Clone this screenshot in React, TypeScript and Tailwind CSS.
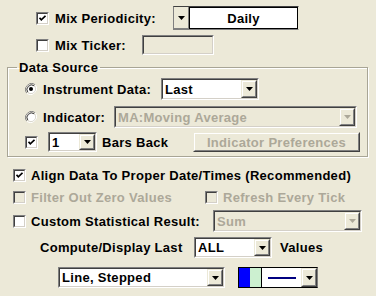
import React from 'react';

const outerSunken = "border border-t-[#808080] border-l-[#808080] border-b-white border-r-white";
const innerSunken = "border border-t-[#404040] border-l-[#404040] border-b-[#d4d0c8] border-r-[#d4d0c8]";
const outerRaised = "border border-t-[#ece9d8] border-l-[#ece9d8] border-b-[#404040] border-r-[#404040]";
const innerRaised = "border border-t-white border-l-white border-b-[#808080] border-r-[#808080]";

function Arrow({ disabled = false }: { disabled?: boolean }) {
    return (
        <svg width="7" height="4" viewBox="0 0 7 4">
            <path d="M0 0h7L3.5 4z" fill={disabled ? '#aca899' : '#000'} />
        </svg>
    );
}

function DropButton({ disabled = false }: { disabled?: boolean }) {
    return (
        <div className={`w-[16px] h-full shrink-0 bg-[#ece9d8] ${outerRaised}`}>
            <div className={`w-full h-full flex items-center justify-center ${innerRaised}`}>
                <Arrow disabled={disabled} />
            </div>
        </div>
    );
}

function Check({ checked = false, disabled = false }: { checked?: boolean; disabled?: boolean }) {
    return (
        <div className={`w-[13px] h-[13px] shrink-0 ${outerSunken}`}>
            <div className={`w-full h-full flex items-center justify-center ${innerSunken} ${disabled ? 'bg-[#ece9d8]' : 'bg-white'}`}>
                {checked && (
                    <svg width="7" height="7" viewBox="0 0 7 7">
                        <path d="M0.5 2.8 L2.3 4.8 L6.5 0.8" stroke="#000" strokeWidth="1.7" fill="none" />
                    </svg>
                )}
            </div>
        </div>
    );
}

function Radio({ checked = false }: { checked?: boolean }) {
    return (
        <svg width="12" height="12" viewBox="0 0 12 12" className="shrink-0">
            <path d="M10.2 1.8 A6 6 0 0 0 1.8 10.2" stroke="#808080" strokeWidth="1" fill="none" />
            <path d="M1.8 10.2 A6 6 0 0 0 10.2 1.8" stroke="#fff" strokeWidth="1" fill="none" />
            <circle cx="6" cy="6" r="4.6" fill="#fff" stroke="#d4d0c8" strokeWidth="0.8" />
            <path d="M9.2 2.8 A4.6 4.6 0 0 0 2.8 9.2" stroke="#404040" strokeWidth="1" fill="none" />
            {checked && <circle cx="6" cy="6" r="2" fill="#000" />}
        </svg>
    );
}

function Combo({ value, w, h = 21, disabled = false }: { value: string; w: string; h?: number; disabled?: boolean }) {
    return (
        <div className={`${w} shrink-0 ${outerSunken}`} style={{ height: h }}>
            <div className={`w-full h-full flex items-stretch ${innerSunken} ${disabled ? 'bg-[#ece9d8] text-[#aca899]' : 'bg-white'}`}>
                <span className="flex-1 pl-[2px] flex items-center whitespace-nowrap overflow-hidden">{value}</span>
                <DropButton disabled={disabled} />
            </div>
        </div>
    );
}

export default function App() {
    return (
        <div className="w-[376px] h-[296px] bg-[#ece9d8] font-['Liberation_Sans',Arial,sans-serif] font-bold text-[13px] tracking-[0.3px] leading-[15px] text-black flex flex-col overflow-hidden">
            {/* mix periodicity */}
            <div className="mt-[6px] h-[24px] pl-[36px] flex items-center">
                <Check checked />
                <span className="ml-[6px] w-[118px]">Mix Periodicity:</span>
                <div className="w-[126px] h-[24px] flex border border-t-[#404040] border-l-[#808080] border-b-[#808080] border-r-[#ece9d8]">
                    <div className="w-[15px] h-full flex items-center justify-center border-r border-b border-[#808080] bg-[#ece9d8]">
                        <Arrow />
                    </div>
                    <div className="flex-1 bg-white border border-black flex items-center justify-center">Daily</div>
                </div>
            </div>

            {/* mix ticker */}
            <div className="mt-[5px] h-[20px] pl-[36px] flex items-center">
                <Check />
                <span className="ml-[6px] w-[87px]">Mix Ticker:</span>
                <div className={`w-[72px] h-[20px] ${outerSunken}`}>
                    <div className={`w-full h-full ${innerSunken}`} />
                </div>
            </div>

            {/* data source */}
            <fieldset className="mt-[5px] ml-[7px] w-[361px] border border-[#a8a595] shadow-[inset_1px_1px_0_#fff,1px_1px_0_#fff] pb-[4px] pl-[17px]">
                <legend className="ml-[-8px] px-[2px] leading-[15px]">Data Source</legend>
                <div className="mt-[3px] h-[22px] flex items-center">
                    <Radio checked />
                    <span className="ml-[6px] w-[118px]">Instrument Data:</span>
                    <Combo value="Last" w="w-[98px]" h={22} />
                </div>
                <div className="mt-[6px] h-[22px] flex items-center">
                    <Radio />
                    <span className="ml-[6px] w-[71px]">Indicator:</span>
                    <Combo value="MA:Moving Average" w="w-[243px]" h={22} disabled />
                </div>
                <div className="mt-[4px] h-[20px] flex items-center">
                    <Check checked />
                    <div className="ml-[10px]">
                        <Combo value="1" w="w-[49px]" h={20} />
                    </div>
                    <span className="ml-[5px] w-[91px]">Bars Back</span>
                    <div className={`w-[167px] h-[20px] ${outerRaised}`}>
                        <div className={`w-full h-full flex items-center justify-center text-[#aca899] ${innerRaised}`}>Indicator Preferences</div>
                    </div>
                </div>
            </fieldset>

            {/* options */}
            <div className="mt-[10px] h-[16px] pl-[13px] flex items-center">
                <Check checked />
                <span className="ml-[5px]">Align Data To Proper Date/Times (Recommended)</span>
            </div>
            <div className="mt-[6px] h-[16px] pl-[13px] flex items-center text-[#aca899]">
                <Check disabled />
                <span className="ml-[5px] w-[174px]">Filter Out Zero Values</span>
                <Check disabled />
                <span className="ml-[5px]">Refresh Every Tick</span>
            </div>
            <div className="mt-[5px] h-[22px] pl-[13px] flex items-center">
                <Check />
                <span className="ml-[5px] w-[182px]">Custom Statistical Result:</span>
                <Combo value="Sum" w="w-[149px]" h={22} disabled />
            </div>
            <div className="mt-[5px] h-[21px] pl-[40px] flex items-center">
                <span className="w-[154px]">Compute/Display Last</span>
                <Combo value="ALL" w="w-[78px]" />
                <span className="ml-[8px]">Values</span>
            </div>
            <div className="mt-[9px] h-[21px] pl-[58px] flex items-center">
                <Combo value="Line, Stepped" w="w-[167px]" />
                <div className="ml-[13px] w-[80px] h-[21px] flex border border-black border-r-[#808080]">
                    <div className="w-[11px] bg-[#0000ff]" />
                    <div className="w-[12px] bg-[#ccf0d0] border-r border-black" />
                    <div className="flex-1 bg-white flex items-center justify-center">
                        <div className="w-[28px] h-[2px] bg-[#000080]" />
                    </div>
                    <DropButton />
                </div>
            </div>
        </div>
    );
}
